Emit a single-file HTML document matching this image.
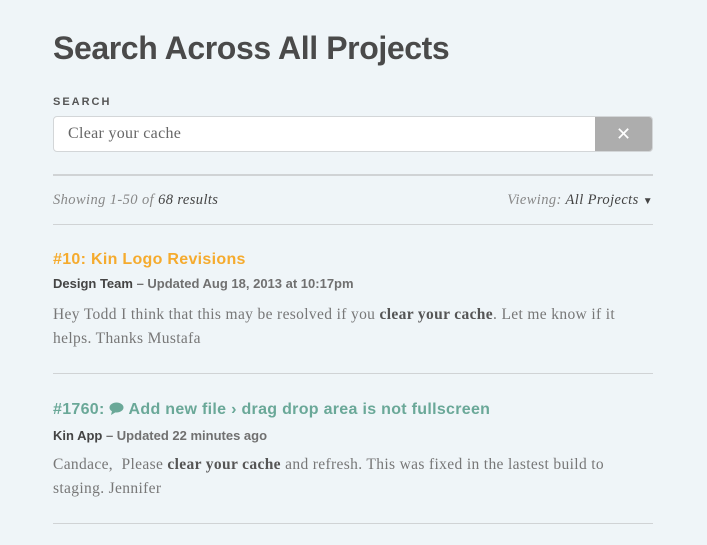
<!DOCTYPE html>
<html><head><style>
body{margin:0;background:#eff5f8;width:707px;height:545px;overflow:hidden;font-family:"Liberation Sans",sans-serif;}
.wrap{position:absolute;left:53px;width:600px;top:0}
h1{position:absolute;top:30px;left:0;margin:0;font-size:32px;font-weight:bold;color:#4a4a4a;letter-spacing:-0.4px}
.lbl{position:absolute;top:96px;font-size:11px;font-weight:bold;letter-spacing:2px;color:#555}
.inp{position:absolute;top:116px;left:0;width:598px;height:34px;border:1px solid #d3d6d8;border-radius:4px;background:#fff;overflow:hidden}
.inp span{position:absolute;left:14px;top:8px;font-family:"Liberation Serif",serif;font-size:16px;color:#666;letter-spacing:0.3px}
.x{position:absolute;right:0;top:0;width:57px;height:34px;background:#adadad;color:#fff;font-size:18px;text-align:center;line-height:34px}
.hr{position:absolute;left:0;width:600px;height:1px;background:#d0d3d5}
.serif{font-family:"Liberation Serif",serif;}
.it{font-style:italic;font-size:14.5px;color:#888;position:absolute;top:192px;letter-spacing:0.4px}
.it b{font-weight:normal;color:#444}
.t{position:absolute;font-size:16px;font-weight:bold;letter-spacing:0.3px}
.m{position:absolute;font-size:13px;font-weight:bold;color:#707070}
.m b{color:#444}
.p{position:absolute;font-family:"Liberation Serif",serif;font-size:15.5px;color:#777;line-height:24px;width:600px;letter-spacing:0.35px}
.p b{color:#555}
</style></head><body><div class="wrap">
<h1>Search Across All Projects</h1>
<div class="lbl">SEARCH</div>
<div class="inp"><span>Clear your cache</span><div class="x">✕</div></div>
<div class="hr" style="top:174px;height:2px"></div>
<div class="it serif" style="left:0">Showing 1-50 of <b>68 results</b></div>
<div class="it serif" style="right:0">Viewing: <b>All Projects</b> <span style="font-style:normal;font-size:10px;color:#444">▼</span></div>
<div class="hr" style="top:224px"></div>
<div class="t" style="top:251px;color:#f5ab2e">#10: Kin Logo Revisions</div>
<div class="m" style="top:276px"><b>Design Team</b> – Updated Aug 18, 2013 at 10:17pm</div>
<div class="p" style="top:303px">Hey Todd I think that this may be resolved if you <b>clear your cache</b>. Let me know if it helps. Thanks Mustafa</div>
<div class="hr" style="top:373px"></div>
<div class="t" style="top:401px;color:#6aa898">#1760:&nbsp;<svg width="15" height="13" viewBox="0 0 15 13" style="vertical-align:-1px"><ellipse cx="7.5" cy="5.5" rx="7" ry="5" fill="#6aa898"/><path d="M3 9 L2 13 L7 10 Z" fill="#6aa898"/></svg> Add new file › drag drop area is not fullscreen</div>
<div class="m" style="top:428px"><b>Kin App</b> – Updated 22 minutes ago</div>
<div class="p" style="top:453px">Candace,&nbsp; Please <b>clear your cache</b> and refresh. This was fixed in the lastest build to staging. Jennifer</div>
<div class="hr" style="top:523px"></div>
</div></body></html>
